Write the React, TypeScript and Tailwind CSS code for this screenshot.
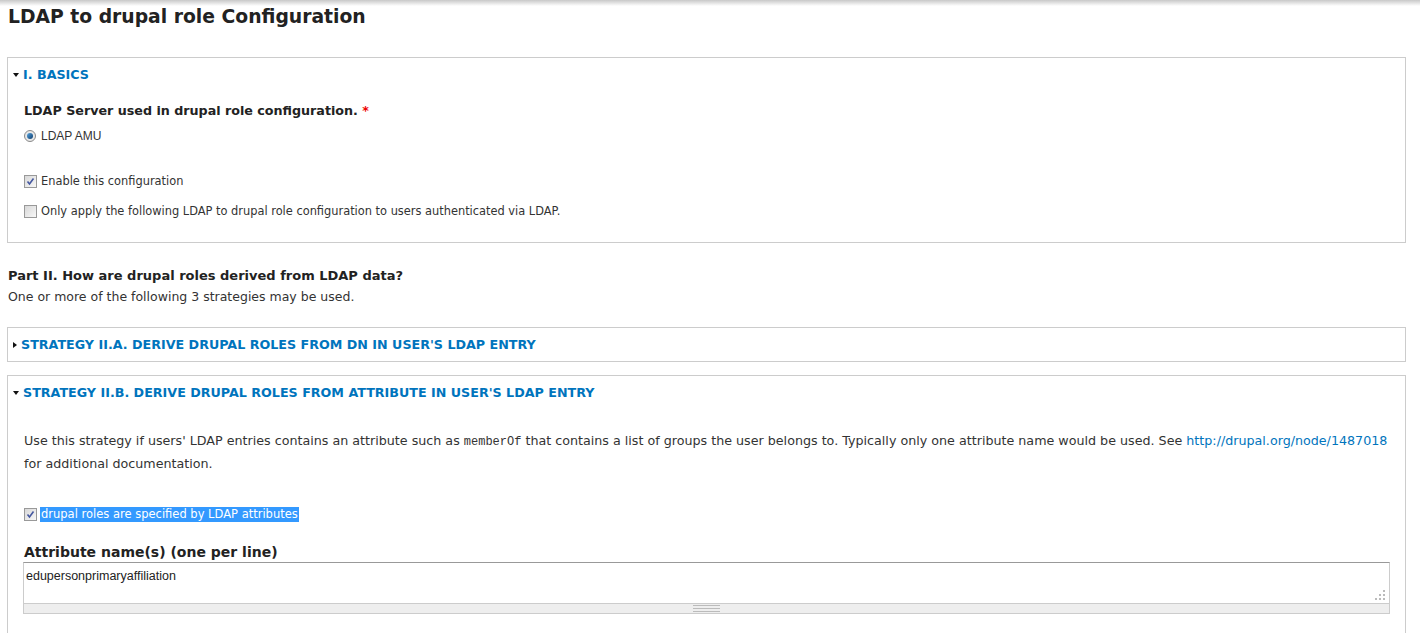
import type { ReactNode } from "react";

const FONT = "font-['DejaVu_Sans',Verdana,sans-serif]";

function Legend({ open, children }: { open: boolean; children: ReactNode }) {
  return (
    <div className="flex items-center gap-[4px] text-[12.7px] font-bold uppercase leading-[13px] text-[#0074bd]">
      {open ? (
        <span className="h-0 w-0 border-x-[3.5px] border-t-[4px] border-x-transparent border-t-[#111]" />
      ) : (
        <span className="h-0 w-0 border-y-[3.5px] border-l-[4px] border-y-transparent border-l-[#111]" />
      )}
      <span>{children}</span>
    </div>
  );
}

function Checkbox({ checked }: { checked: boolean }) {
  return (
    <span className="flex h-[13px] w-[13px] shrink-0 items-center justify-center border border-[#999] bg-gradient-to-br from-[#d8d8d8] to-[#f8f8f8]">
      {checked ? (
        <svg width="9" height="9" viewBox="0 0 9 9">
          <path d="M1.5 4.5 L3.5 7 L7.5 1.5" fill="none" stroke="#4558a0" strokeWidth="1.6" />
        </svg>
      ) : null}
    </span>
  );
}

function Radio() {
  return (
    <span className="flex h-[12px] w-[12px] shrink-0 items-center justify-center rounded-full border border-[#8a8a8a] bg-[#e8e8e8]">
      <span className="h-[6px] w-[6px] rounded-full bg-gradient-to-br from-[#5aa6e0] to-[#0b3d6e]" />
    </span>
  );
}

export default function App() {
  return (
    <div className={`${FONT} relative min-h-[633px] bg-white text-[#333]`}>
      <div className="pointer-events-none absolute inset-x-0 top-0 h-[6px] bg-gradient-to-b from-[#c8c8c8] to-transparent" />

      <h1 className="px-[8px] pt-[5px] text-[18.75px] font-bold leading-[24px] text-[#222]">LDAP to drupal role Configuration</h1>

      <div className="ml-[7px] mr-[14px] mt-[28px] border border-[#ccc] pb-[24px]">
        <div className="pl-[5px] pt-[10px]">
          <Legend open>I. Basics</Legend>
        </div>
        <div className="px-[16px]">
          <div className="mt-[22px] text-[12.7px] font-bold leading-[16px] text-[#222]">
            LDAP Server used in drupal role configuration. <span className="text-[#e00]">*</span>
          </div>
          <label className="mt-[10px] flex items-center gap-[5px] font-['Liberation_Sans',Arial,sans-serif] text-[12px] leading-[14px]">
            <Radio />
            LDAP AMU
          </label>
          <label className="mt-[31px] flex items-center gap-[4px] text-[11.4px] leading-[14px]">
            <Checkbox checked />
            Enable this configuration
          </label>
          <label className="mt-[16px] flex items-center gap-[4px] text-[11.4px] leading-[14px]">
            <Checkbox checked={false} />
            Only apply the following LDAP to drupal role configuration to users authenticated via LDAP.
          </label>
        </div>
      </div>

      <div className="mt-[25px] px-[8px]">
        <div className="text-[13px] font-bold leading-[16px] text-[#222]">Part II. How are drupal roles derived from LDAP data?</div>
        <div className="mt-[5px] text-[12.5px] leading-[16px]">One or more of the following 3 strategies may be used.</div>
      </div>

      <div className="ml-[7px] mr-[14px] mt-[22px] border border-[#ccc] pb-[10px] pl-[5px] pt-[10px]">
        <Legend open={false}>Strategy II.A. Derive drupal roles from DN in user's LDAP entry</Legend>
      </div>

      <div className="ml-[7px] mr-[14px] mt-[13px] border border-[#ccc] pb-[20px]">
        <div className="pl-[5px] pt-[10px]">
          <Legend open>Strategy II.B. Derive drupal roles from attribute in user's LDAP entry</Legend>
        </div>
        <div className="px-[16px]">
          <p className="-mr-[8px] mt-[31px] text-[12.7px] leading-[22px]">
            Use this strategy if users' LDAP entries contains an attribute such as{" "}
            <code className="font-['Liberation_Mono','Courier_New',monospace] text-[12px]">memberOf</code> that contains a list of groups the
            user belongs to. Typically only one attribute name would be used. See{" "}
            <a className="text-[#0074bd]">http://drupal.org/node/1487018</a> for additional documentation.
          </p>
          <label className="mt-[32px] flex items-center gap-[3px] text-[11.5px] leading-[15px]">
            <Checkbox checked />
            <span className="bg-[#3399ff] px-[1px] text-white">drupal roles are specified by LDAP attributes</span>
          </label>
          <div className="mt-[22px] text-[14px] font-bold leading-[16px] text-[#222]">Attribute name(s) (one per line)</div>
          <div className="-mx-[1px] mt-[2px]">
            <div className="relative h-[42px] border border-[#ccc] border-t-[#999] px-[2px] pt-[4px] font-['Liberation_Sans',Arial,sans-serif] text-[12.5px] text-[#222]">
              edupersonprimaryaffiliation
              <svg className="absolute bottom-[2px] right-[3px]" width="12" height="12" viewBox="0 0 12 12">
                <g fill="#bbb">
                  <rect x="9" y="1" width="2" height="2" />
                  <rect x="5" y="5" width="2" height="2" />
                  <rect x="9" y="5" width="2" height="2" />
                  <rect x="1" y="9" width="2" height="2" />
                  <rect x="5" y="9" width="2" height="2" />
                  <rect x="9" y="9" width="2" height="2" />
                </g>
              </svg>
            </div>
            <div className="flex h-[10px] items-center justify-center border-x border-b border-[#ccc] bg-[#eee]">
              <div className="flex w-[27px] flex-col gap-[2px]">
                <span className="h-px bg-[#bbb]" />
                <span className="h-px bg-[#bbb]" />
                <span className="h-px bg-[#bbb]" />
              </div>
            </div>
          </div>
        </div>
      </div>
    </div>
  );
}
